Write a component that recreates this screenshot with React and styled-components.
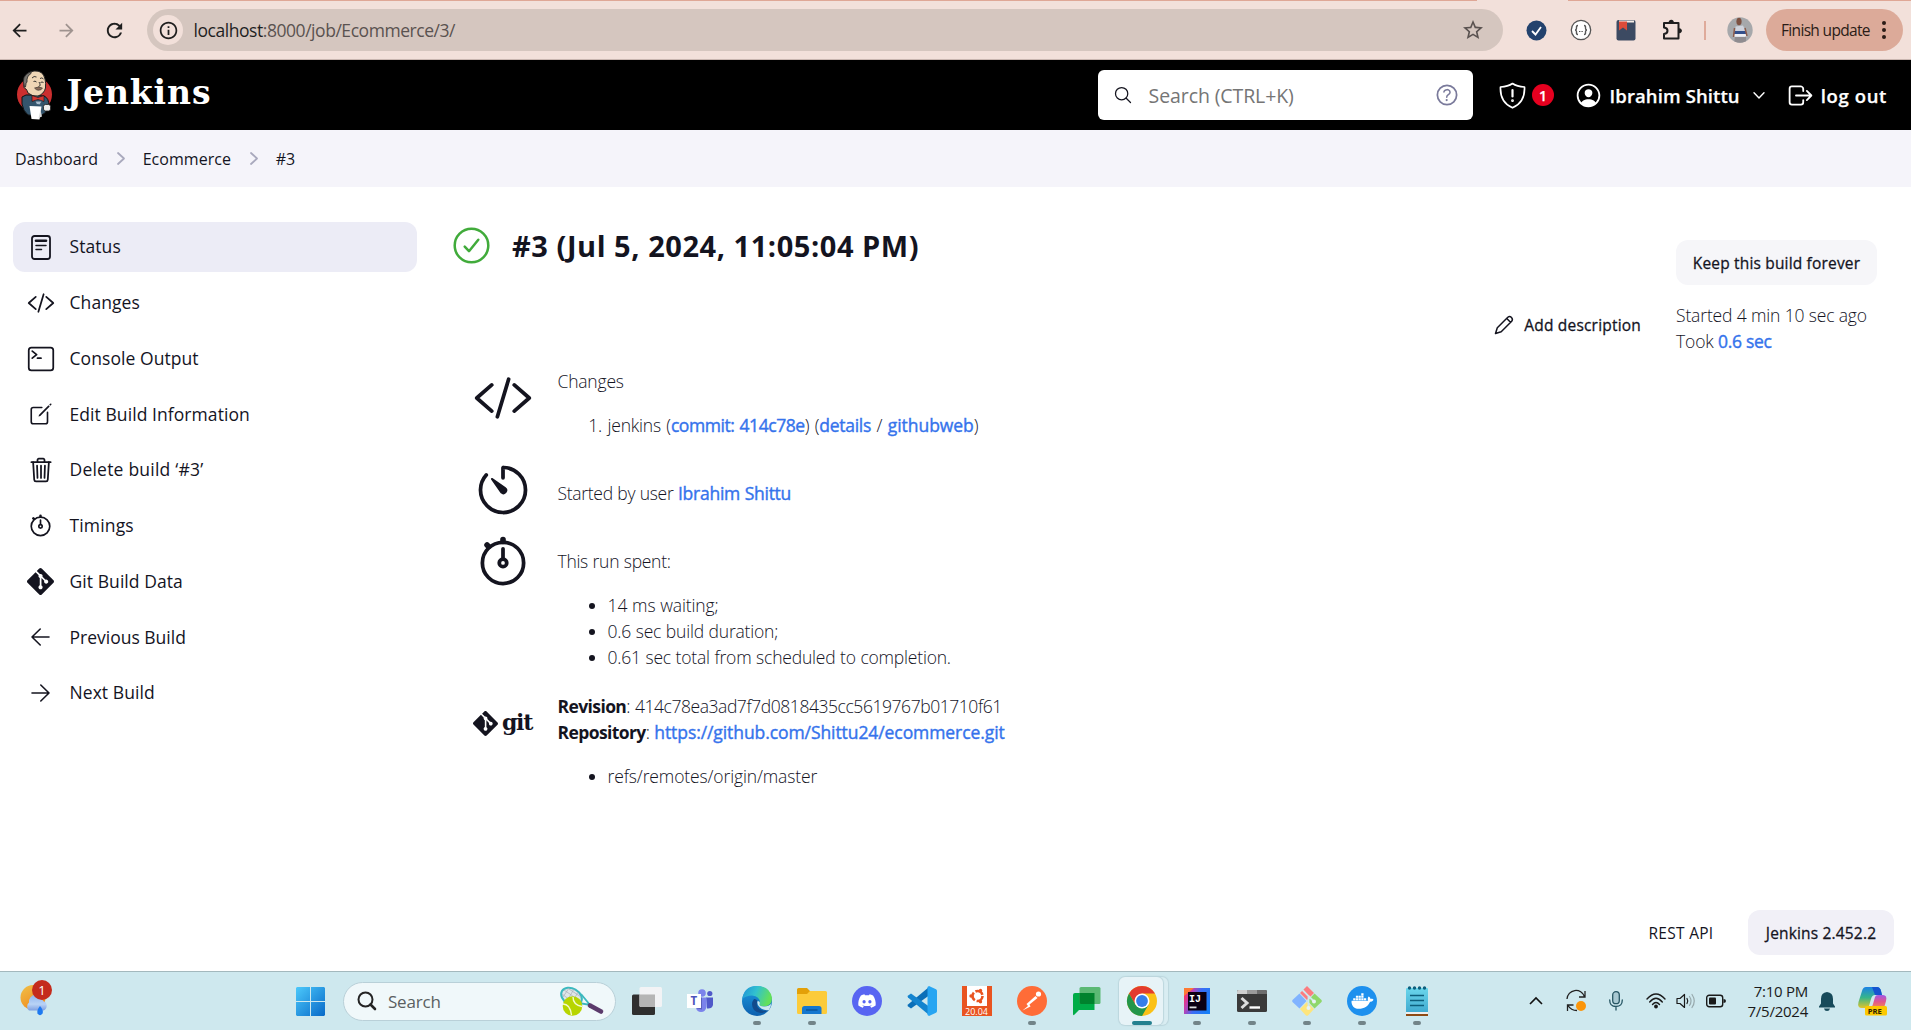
import React from "react";
import styled, { createGlobalStyle, css } from "styled-components";
import {
  IoCodeSlashOutline, IoTerminalOutline, IoCreateOutline, IoTrashOutline, IoStopwatchOutline,
  IoTimerOutline, IoSearchOutline, IoHelpCircleOutline, IoPersonCircleOutline, IoLogOutOutline,
} from "react-icons/io5";
import { MdArrowBack, MdArrowForward, MdRefresh, MdStarBorder, MdInfoOutline } from "react-icons/md";
import { SiGit } from "react-icons/si";
import { FaDiscord, FaDocker } from "react-icons/fa";

const ink = "#14141f";
const link = "#3573ec";

const GlobalStyle = createGlobalStyle`
  * { box-sizing: border-box; }
  body { margin: 0; background: #fff; overflow: hidden; }
  svg { display: block; flex: none; overflow: visible; }
`;

const medium = css`
  font-weight: 400;
  -webkit-text-stroke: 0.28px currentColor;
`;

const Screen = styled.div`
  width: 1911px;
  height: 1030px;
  display: flex;
  flex-direction: column;
  font-family: "Open Sans", "Noto Sans", sans-serif;
  color: ${ink};
  white-space: nowrap;
`;

/* ---------- browser toolbar ---------- */
const BrowserTop = styled.div`
  height: 1px;
  flex: none;
  background: linear-gradient(90deg, #dfa796 1477px, #f2e0da 1477px 1568px, #dfa796 1568px);
`;
const BrowserBar = styled.div`
  height: 59px;
  flex: none;
  display: flex;
  align-items: center;
  background: #f2e0da;
  border-bottom: 1px solid #c9b6b0;
  padding: 0 8px 0 7px;
`;
const NavButton = styled.div`
  width: 25px;
  margin-right: ${(p) => p.$gap}px;
  display: flex;
  justify-content: center;
  color: ${(p) => (p.$dim ? "#9f938f" : "#1f1f1f")};
`;
const AddressBar = styled.div`
  width: 1356px;
  height: 42px;
  border-radius: 21px;
  background: #d5c6bf;
  display: flex;
  align-items: center;
  padding: 0 18px 0 6px;
`;
const SiteInfo = styled.div`
  width: 30px;
  height: 30px;
  border-radius: 50%;
  background: #f2e0da;
  display: flex;
  align-items: center;
  justify-content: center;
  color: #1f1f1f;
`;
const Url = styled.div`
  flex: 1;
  margin-left: 10.5px;
  font-size: 17.5px;
  letter-spacing: -0.45px;
  color: #5a5250;
  span { color: #1f1f1f; }
`;
const Extensions = styled.div`
  display: flex;
  align-items: center;
  margin-left: 23px;
  gap: 23px;
  color: #1f1f1f;
`;
const BarDivider = styled.div`
  width: 2px;
  height: 19px;
  background: #dfab9b;
  margin: 0 -2px 0 -3px;
`;
const UpdateButton = styled.div`
  margin-left: auto;
  width: 137px;
  height: 42px;
  border-radius: 21px;
  background: #dcaa99;
  display: flex;
  align-items: center;
  justify-content: space-between;
  padding: 0 16px 0 15px;
  font-size: 15.5px;
  letter-spacing: -0.67px;
  color: #2b1c17;
`;

/* ---------- Jenkins header ---------- */
const Header = styled.header`
  height: 70px;
  flex: none;
  background: #000;
  color: #fff;
  display: flex;
  align-items: center;
  padding: 0 24px 0 16px;
`;
const LogoText = styled.div`
  margin: -4px auto 0 14.5px;
  font-family: "DejaVu Serif", serif;
  font-weight: 700;
  font-size: 33px;
  letter-spacing: 0.9px;
  line-height: 40px;
`;
const SearchBox = styled.div`
  width: 375px;
  height: 50px;
  border-radius: 6px;
  background: #fff;
  display: flex;
  align-items: center;
  padding: 0 12px 0 15px;
  color: ${ink};
`;
const SearchHint = styled.div`
  flex: 1;
  margin-left: 16px;
  font-size: 19.5px;
  letter-spacing: -0.1px;
  color: #757575;
`;
const HelpIcon = styled.div`color: #7a7a9b;`;
const AlertCount = styled.div`
  width: 22px;
  height: 22px;
  margin-left: 6px;
  border-radius: 50%;
  background: #e6001f;
  display: flex;
  align-items: center;
  justify-content: center;
  font-size: 14px;
  font-weight: 600;
`;
const HeaderItem = styled.div`
  display: flex;
  align-items: center;
  margin-left: ${(p) => p.$left}px;
  gap: ${(p) => p.$gap}px;
  font-size: 18.5px;
  font-weight: 600;
  letter-spacing: ${(p) => p.$ls || 0}px;
  -webkit-text-stroke: 0.25px currentColor;
`;

const Breadcrumbs = styled.nav`
  height: 57px;
  flex: none;
  display: flex;
  align-items: center;
  background: #f5f4fa;
  padding: 0 15px;
  font-size: 16px;
  letter-spacing: 0.06px;
  svg { margin: 0 18px 0 18.5px; }
`;

/* ---------- content ---------- */
const Body = styled.div`
  flex: 1;
  min-height: 0;
  display: flex;
  padding: 35px 0 0 13px;
`;
const Sidebar = styled.aside`
  width: 404px;
  display: flex;
  flex-direction: column;
  gap: 5.75px;
`;
const Task = styled.div`
  height: 50px;
  flex: none;
  border-radius: 12px;
  background: ${(p) => (p.$active ? "#ececf6" : "transparent")};
  display: flex;
  align-items: center;
  font-size: 17.5px;
  letter-spacing: ${(p) => p.$ls ?? 0.07}px;
`;
const TaskIcon = styled.div`
  width: 28px;
  margin: 0 15px 0 13.5px;
  display: flex;
  justify-content: center;
`;
const TaskLabel = styled.span`
  padding-bottom: 1.5px;
`;
const Main = styled.main`
  flex: 1;
  display: flex;
  flex-direction: column;
  padding: 0 17px 0 36px;
`;
const MainTop = styled.div`
  display: flex;
  height: 147px;
`;
const Title = styled.h1`
  margin: 0;
  height: 46px;
  flex: 1;
  display: flex;
  align-items: center;
  gap: 22px;
  font-size: 29px;
  font-weight: 700;
  letter-spacing: 0.55px;
`;
const AddDescription = styled.div`
  align-self: flex-start;
  display: flex;
  align-items: center;
  height: 30px;
  margin: 88px 35px 0 0;
  gap: 10.5px;
  font-size: 15.5px;
  letter-spacing: 0.2px;
  ${medium}
`;
const BuildMeta = styled.div`
  width: 218px;
  padding-top: 18px;
  font-size: 17.5px;
  font-weight: 300;
  line-height: 26px;
  letter-spacing: -0.15px;
`;
const Button = styled.div`
  width: ${(p) => p.$w}px;
  height: 45px;
  border-radius: 12px;
  background: ${(p) => p.$bg};
  display: flex;
  align-items: center;
  justify-content: center;
  font-size: 15.5px;
  letter-spacing: 0.17px;
  margin-bottom: ${(p) => p.$bottom || 0}px;
  ${medium}
`;
const Link = styled.span`
  color: ${link};
  letter-spacing: ${(p) => p.$ls ?? -0.35}px;
  ${medium}
  -webkit-text-stroke-width: 0.4px;
`;
const Row = styled.section`
  display: flex;
  height: ${(p) => p.$h}px;
  font-size: 17.5px;
  font-weight: 300;
  line-height: 26px;
  letter-spacing: -0.2px;
  word-spacing: 0.3px;
  b { font-weight: 700; letter-spacing: -0.6px; }
`;
const Tracked = styled.span`letter-spacing: ${(p) => p.$ls}px;`;
const RowIcon = styled.div`
  width: 60px;
  margin: ${(p) => p.$top}px 24.5px 0 20px;
`;
const RowText = styled.div`
  margin-top: -1px;
  padding-top: ${(p) => p.$top}px;
`;
const listStyle = css`
  margin: 18px 0 0;
  padding: 0 0 0 50px;
`;
const Bullets = styled.ul`${listStyle}`;
const Numbers = styled.ol`${listStyle} word-spacing: 1.1px;`;
const GitMark = styled.div`
  display: flex;
  align-items: center;
  gap: 4px;
  height: 30px;
  font-family: "DejaVu Serif", serif;
  font-size: 22px;
  font-weight: 700;
  letter-spacing: -1.3px;
  line-height: 26px;
  svg { margin-top: 2px; }
`;
const Footer = styled.footer`
  margin-top: auto;
  display: flex;
  justify-content: flex-end;
  align-items: center;
  gap: 34.5px;
  padding-bottom: 16px;
  font-size: 15.5px;
  letter-spacing: 0.3px;
`;

/* ---------- taskbar ---------- */
const Taskbar = styled.div`
  height: 59px;
  flex: none;
  border-top: 1px solid #a3b8bd;
  background: #cee8ee;
  display: flex;
  align-items: center;
`;
const Weather = styled.div`
  position: relative;
  width: 36px;
  height: 44px;
  margin: 0 240px 0 20px;
`;
const WeatherCount = styled.div`
  position: absolute;
  left: 12px;
  top: 1px;
  width: 20px;
  height: 20px;
  border-radius: 50%;
  background: #c42b1c;
  color: #fff;
  font-size: 13px;
  line-height: 20px;
  text-align: center;
`;
const TaskSearch = styled.div`
  width: 273px;
  height: 39px;
  margin: 0 4px 0 17.5px;
  border-radius: 20px;
  border: 1px solid #b9d0d8;
  background: #f0f8fa;
  display: flex;
  align-items: center;
  padding: 0 11px 0 13px;
  font-size: 17px;
  letter-spacing: -0.2px;
  color: #5a5f61;
  span { flex: 1; margin-left: 11.5px; }
`;
const AppSlot = styled.div`
  position: relative;
  width: 55px;
  height: 58px;
  display: flex;
  align-items: center;
  justify-content: center;
`;
const Indicator = styled.i`
  position: absolute;
  top: 49px;
  left: ${(p) => (p.$active ? 17.5 : 23.5)}px;
  width: ${(p) => (p.$active ? 20 : 8)}px;
  height: 4px;
  border-radius: 2px;
  background: ${(p) => (p.$active ? "#24808f" : "#728488")};
`;
const Tile = styled.div`
  position: absolute;
  left: ${(p) => p.$x}px;
  top: 5px;
  width: 44px;
  height: 48px;
  border-radius: 6px;
  background: ${(p) => p.$bg};
  box-shadow: 0 0 1px 1px #bcd6dd;
`;
const Front = styled.div`position: relative;`;
const Tray = styled.div`
  margin-left: auto;
  display: flex;
  align-items: center;
  padding-right: 11px;
  color: #1a1a1a;
`;
const TraySlot = styled.div`
  width: ${(p) => p.$w}px;
  display: flex;
  justify-content: center;
`;
const Clock = styled.div`
  width: 72px;
  text-align: right;
  font-size: 15px;
  line-height: 20px;
  letter-spacing: -0.25px;
`;

/* ---------- drawings ---------- */
const Butler = () => (
  <svg width="36" height="50" viewBox="0 0 36 50">
    <ellipse cx="18.5" cy="24.500" rx="17.500" ry="17.500" fill="#cc2f2f" />
    <path d="M6 27 Q10 24 14 25 L28 26 Q33 28 33 36 L29 43 L24 46 L12 45 Q7 41 6 34z" fill="#34556d" stroke="#111" strokeWidth="1" />
    <path d="M9 12 Q9 2 18 1 Q27 0 29 9 Q30 13 29.500 18 Q28 24 22 26 Q17 27 12 23 Q11 20 10 19 Q6 18 9 12z" fill="#efd6b5" stroke="#222" strokeWidth="1" />
    <path d="M8.500 17 Q4.500 6 14 2 Q16 2 15 3.500 Q10.500 6 11 12 Q10 12 9.500 17z" fill="#77746f" stroke="#222" strokeWidth="0.8" />
    <path d="M16 8 Q18 5.500 20.500 7 M24 8.500 Q26 7 27.500 9 M17.500 11.500 Q19 10.500 20.500 12 M24.500 12.500 Q26 11.500 27.500 12.500 M23 12 Q25.500 16 22.500 16.500" fill="none" stroke="#222" strokeWidth="0.9" />
    <path d="M18.500 18 Q22.500 16 26.500 18 Q25.500 20.500 22 20.300 Q20 20 18.500 18z" fill="#8a6b58" stroke="#222" strokeWidth="0.5" />
    <path d="M16 25.500 L22 27.500 L28 25.500 L28 31.500 L22 29.500 L16 31.500z" fill="#d33833" stroke="#111" strokeWidth="0.6" />
    <path d="M19 31 L26 31 L24 35 L20.500 34.500z" fill="#a9bccd" stroke="#34556d" />
    <path d="M13.500 36 L25.500 36.500 L23.500 49.500 L15.500 49z" fill="#fff" />
    <path d="M24.500 40 L26 46.500 L22.500 48z" fill="#ddd" />
    <rect x="27.500" y="34.500" width="7" height="6.500" rx="2" fill="#eee" stroke="#222" strokeWidth="0.8" />
  </svg>
);
const Shield = () => (
  <svg width="27" height="27" viewBox="0 0 27 27" fill="none" stroke="#fff" strokeWidth="1.7" strokeLinejoin="round" strokeLinecap="round">
    <path d="M13.5 1.5 C10 4 6 4.8 1.5 5 C1 15 5 22 13.5 25.8 C22 22 26 15 25.5 5 C21 4.8 17 4 13.5 1.5z" />
    <path d="M13.5 8 V14.5" strokeWidth="2.2" /><circle cx="13.5" cy="18.7" r="0.6" strokeWidth="1.6" />
  </svg>
);
const ChevronDown = () => <svg width="12" height="7" viewBox="0 0 12 7" fill="none" stroke="#fff" strokeWidth="1.4" strokeLinecap="round" strokeLinejoin="round"><path d="M1 0.800 L6 6 L11 0.800" /></svg>;
const Crumb = () => <svg width="8" height="13" viewBox="0 0 8 13" fill="none" stroke="#a9a9bd" strokeWidth="1.800" strokeLinecap="round" strokeLinejoin="round"><path d="M1 1 L7 6.500 L1 12" /></svg>;
const StatusDoc = () => (
  <svg width="20" height="25" viewBox="0 0 20 25" fill="none" stroke={ink} strokeLinecap="round">
    <rect x="1" y="1" width="18" height="23" rx="2.5" strokeWidth="1.8" />
    <path d="M5 5.8 H15" strokeWidth="2.6" /><path d="M5 10.5 H15 M5 14.5 H10.5" strokeWidth="1.5" />
  </svg>
);
const Arrow = ({ flip }) => (
  <svg width="19" height="18" viewBox="0 0 19 18" fill="none" stroke={ink} strokeWidth="1.600" strokeLinecap="round" strokeLinejoin="round">
    <path d={flip ? "M1 9 H18 M9.800 1 L18 9 L9.800 17" : "M18 9 H1 M9.200 1 L1 9 L9.200 17"} />
  </svg>
);
const Pencil = () => (
  <svg width="20" height="20" viewBox="0 0 20 20" fill="none" stroke={ink} strokeWidth="1.500" strokeLinejoin="round" strokeLinecap="round">
    <path d="M1.500 18.500 L3.300 12.800 L13.800 2.300 Q15.700 0.700 17.500 2.500 Q19.200 4.300 17.700 6.200 L7.200 16.700z M12.800 3.500 L16.500 7.200" />
  </svg>
);
const StatusOk = () => (
  <svg width="37" height="37" viewBox="0 0 37 37" fill="none" stroke="#41ab3b" strokeWidth="2.5" strokeLinecap="round" strokeLinejoin="round">
    <circle cx="18.5" cy="18.5" r="16.8" /><path d="M11.7 19.6 L16 24.2 L25.3 12.8" />
  </svg>
);
const CheckBadge = () => (
  <svg width="21" height="21" viewBox="0 0 21 21"><circle cx="10.5" cy="10.5" r="10" fill="#23426d" /><path d="M6 11 L9.5 14.5 L15 7" stroke="#fff" strokeWidth="1.8" fill="none" /></svg>
);
const JsonBadge = () => (
  <svg width="22" height="22" viewBox="0 0 22 22" fill="none" stroke="#555"><circle cx="11" cy="11" r="9.7" fill="#fff" strokeWidth="1.3" /><path d="M8 6.5 Q6.3 6.5 6.5 8.5 Q6.6 11 5 11 Q6.6 11 6.5 13.5 Q6.3 15.5 8 15.5 M14 6.5 Q15.7 6.5 15.5 8.5 Q15.4 11 17 11 Q15.4 11 15.5 13.5 Q15.7 15.5 14 15.5" strokeWidth="1.4" /><path d="M9 12.5h4" strokeDasharray="1 0.6" /></svg>
);
const BookBadge = () => (
  <svg width="22" height="22" viewBox="0 0 22 22"><rect x="1.5" y="1" width="19" height="20.5" rx="2" fill="#3c4a62" /><path d="M4 1.5 h15 v2 H4z" fill="#f7efe9" /><path d="M4 2.5 h8 v9 l-4 -3 l-4 3z" fill="#dd4b39" /></svg>
);
const Puzzle = () => (
  <svg width="24" height="24" viewBox="0 0 24 24" fill="none" stroke="#1f1f1f" strokeWidth="2" strokeLinejoin="round">
    <path d="M4 5 H18.5 V20.5 H4 V16 Q7.5 15.5 7.5 12.7 Q7.5 10 4 9.5z" /><path d="M9.5 4 V3.5 Q11.3 1.3 13 3.5 V4z M19.5 11 H20 Q22.5 12.7 20 14.5 H19.5z" fill="#1f1f1f" strokeWidth="1.4" />
  </svg>
);
const Avatar = () => (
  <svg width="26" height="26" viewBox="0 0 26 26"><clipPath id="av"><circle cx="13" cy="13" r="12.7" /></clipPath><g clipPath="url(#av)"><rect width="26" height="26" fill="#a6a8ab" /><ellipse cx="12" cy="4.500" rx="2.600" ry="3.800" fill="#7d5142" /><path d="M8.500 9.500 L16 8.500 L18 13 V20 H8z" fill="#cfd3dd" /><path d="M7.500 14 H19 V17 H7z" fill="#33508c" /><path d="M7.500 17 H19.500 V19.500 H7z" fill="#f0f0f4" /><path d="M8 20 H19 V26 H7z" fill="#8f8c90" /><path d="M7.500 11 L6.500 20 M18 11 L20 19" stroke="#8c5b4b" strokeWidth="1.500" /></g></svg>
);
const Dots = () => (
  <svg width="6" height="20" viewBox="0 0 6 20" fill="#2b1c17"><circle cx="3" cy="3" r="2" /><circle cx="3" cy="10" r="2" /><circle cx="3" cy="17" r="2" /></svg>
);
const WeatherIcon = () => (
  <svg width="36" height="44" viewBox="0 0 36 44">
    <defs><linearGradient id="sun" x1="0" y1="0" x2="0.6" y2="1"><stop offset="0" stopColor="#f0c14a" /><stop offset="1" stopColor="#f08a1d" /></linearGradient><linearGradient id="cloud" x1="0" y1="0" x2="0" y2="1"><stop offset="0" stopColor="#8fb4ee" /><stop offset="0.6" stopColor="#b9d3f6" /><stop offset="1" stopColor="#7f9fe0" /></linearGradient></defs>
    <circle cx="13" cy="18.500" r="12.500" fill="url(#sun)" />
    <path d="M9 31.500 a5.200 5.200 0 0 1 0 -8 a7 7 0 0 1 14 -1.500 a5 5 0 0 1 0.500 9.500z" fill="url(#cloud)" />
    <path d="M20 27 Q24 31.500 22.500 34.500 Q20 38 17.500 34.500 Q16.500 31 20 27z" fill="#1d79f0" />
  </svg>
);
const WinLogo = () => (
  <svg width="29" height="29" viewBox="0 0 29 29"><defs><linearGradient id="win" x1="0" y1="0" x2="1" y2="1"><stop offset="0" stopColor="#4cc9fb" /><stop offset="1" stopColor="#0769c8" /></linearGradient></defs><path d="M1 0h13v14H0V1zM15 0h13l1 1v13H15zM0 15h14v14H1l-1-1zM15 15h14v13l-1 1H15z" fill="url(#win)" /></svg>
);
const Magnifier = () => (
  <svg width="20" height="20" viewBox="0 0 20 20" fill="none" stroke="#242424" strokeLinecap="round"><circle cx="8.5" cy="8.5" r="7" strokeWidth="2" /><path d="M13.5 13.5 L18 18" strokeWidth="2.6" /></svg>
);
const Racket = () => (
  <svg width="44" height="29" viewBox="0 0 44 29">
    <ellipse cx="11.5" cy="9.5" rx="11" ry="8" transform="rotate(30 11.5 9.5)" fill="#dfe6ea" stroke="#3bb9bf" strokeWidth="2" />
    <path d="M4 3 L20 14 M9 2 L21 10 M2 7 L14 16 M7 14 L14 2 M12 16 L18 5 M3 10 L9 1" stroke="#a9aeb8" strokeWidth="0.7" />
    <path d="M21 7 L30 18 L19 16" fill="none" stroke="#3bb9bf" strokeWidth="1.8" />
    <path d="M30 18.5 L41 24.5" stroke="#5b3a6b" strokeWidth="4.6" strokeLinecap="round" />
    <circle cx="12.5" cy="19" r="9.8" fill="#b7d500" /><path d="M3 17 Q10 17 11.5 28 M13 10 Q13 18 22 19.5" fill="none" stroke="#f4fbd0" strokeWidth="1.4" />
  </svg>
);
const TaskView = () => (
  <svg width="30" height="30" viewBox="0 0 30 30"><rect x="0" y="8.5" width="23" height="20.5" rx="1.5" fill="#2f2f2f" /><rect x="7.5" y="1" width="22.5" height="20" rx="1.5" fill="#f4f4f5" opacity="0.96" /><path d="M7.5 8.5H23V21H9q-1.5 0-1.5-1.5z" fill="#b5b5b5" /></svg>
);
const SvgLetter = styled.text`
  font-family: ${(p) => p.$font || '"Open Sans", sans-serif'};
  font-weight: ${(p) => p.$w || 700};
  font-size: ${(p) => p.$s}px;
`;
const Teams = () => (
  <svg width="30" height="30" viewBox="0 0 30 30"><circle cx="15" cy="7" r="3.800" fill="#7b83eb" /><circle cx="22.800" cy="7.500" r="2.600" fill="#5059c9" /><path d="M19 11.500 H26 V19 Q25 23 20 22.500z" fill="#5059c9" /><path d="M9 11.500 H19.500 V21 Q18.500 26 14 26 Q10 26 9 22z" fill="#7b83eb" /><path d="M9 11.500h6v12l-5-1z" fill="#4b52a8" opacity="0.7" /><rect x="0" y="8" width="14" height="14" fill="#fff" /><SvgLetter x="3.600" y="19" $s={11.500} fill="#4b53bc">T</SvgLetter></svg>
);
const Edge = () => (
  <svg width="30" height="30" viewBox="0 0 30 30"><defs><linearGradient id="eg1" x1="0" y1="0" x2="1" y2="0.3"><stop offset="0" stopColor="#1c8fd8" /><stop offset="0.5" stopColor="#32c1cf" /><stop offset="1" stopColor="#63e05a" /></linearGradient><linearGradient id="eg2" x1="0" y1="0" x2="0" y2="1"><stop offset="0" stopColor="#1b9de2" /><stop offset="1" stopColor="#0d5fae" /></linearGradient></defs>
    <circle cx="15" cy="15" r="15" fill="url(#eg2)" /><path d="M0.3 13 Q2 0 15 0 Q28 0 30 12 Q30 20 22 20.5 Q16 20.5 18 17 Q18 10 10 9.5 Q4 9.5 0.3 13z" fill="url(#eg1)" /><path d="M12 13 Q8 18 12 24 Q18 30 27 24 Q22 26 17.5 23 Q13.5 20 15.5 15 Q14 12.5 12 13z" fill="#124a8c" /><path d="M18 17 Q16 20.5 22 20.5 Q27 20.5 29.4 17.5 Q28.5 22 27 24 Q21 25 17.5 21 Q14.5 18 15.7 15 Q17.5 15 18 17z" fill="#cee8ee" /></svg>
);
const Folder = () => (
  <svg width="30" height="30" viewBox="0 0 30 30"><path d="M0 3.5 Q0 2 1.5 2 H10 L13 5 H20 V12 H0z" fill="#e3a008" /><path d="M0 8 H10 L13 5 H28.5 Q30 5 30 6.5 V26.5 Q30 28 28.5 28 H1.500 Q0 28 0 26.500z" fill="#fccb3a" /><path d="M5 28 V22.500 Q5 20 7.500 20 H22 Q24.500 20 24.500 22.500 V28z" fill="#1577cf" /><path d="M9 24 H20.500" stroke="#0a4f93" strokeWidth="1.300" /></svg>
);
const Discord = () => (
  <svg width="30" height="30" viewBox="0 0 30 30"><circle cx="15" cy="15" r="15" fill="#5865f2" /><g transform="translate(5.500 5.500)"><FaDiscord size={19} color="#fff" /></g></svg>
);
const VSCode = () => (
  <svg width="30" height="30" viewBox="0 0 30 30"><path d="M1 18.500 L22 1 V9.500 L4 22.500 L0.500 20z" fill="#0b6fb8" /><path d="M1 11.500 L22 29 V20.500 L4 7.500 L0.500 10z" fill="#1384cf" /><path d="M22 0 L29 3.200 Q30 3.700 30 5 V25 Q30 26.300 29 26.800 L22 30 L20.500 29 V1z" fill="#27a5f2" /></svg>
);
const Ubuntu = () => (
  <svg width="30" height="30" viewBox="0 0 30 30"><rect width="30" height="30" fill="#e95420" /><rect x="5" y="0" width="20" height="20" fill="#fff" /><circle cx="15.500" cy="10" r="5" fill="none" stroke="#e95420" strokeWidth="2.600" strokeDasharray="8.600 1.800" /><circle cx="9" cy="10" r="1.700" fill="#e95420" /><circle cx="18.500" cy="4.500" r="1.700" fill="#e95420" /><circle cx="18.500" cy="15.700" r="1.700" fill="#e95420" /><SvgLetter x="3" y="28.800" $s={9} $w={400} fill="#fff">20.04</SvgLetter></svg>
);
const Postman = () => (
  <svg width="30" height="30" viewBox="0 0 30 30"><circle cx="15" cy="15" r="15" fill="#ff6c37" /><circle cx="21.500" cy="8" r="2.600" fill="#fff" /><path d="M18.500 10 L9.500 18 L11 20 L5.500 24.500 L13.500 20.500 L12.500 18.500 L20.500 12z" fill="#fff" /></svg>
);
const Chat = () => (
  <svg width="28" height="30" viewBox="0 0 28 30"><path d="M0 9 Q0 7 2 7 H21.500 V24 H6 L1 29 Q0 29.500 0 28z" fill="#00ac47" /><rect x="6.500" y="1" width="21" height="17" rx="1.500" fill="#5bb974" /><path d="M6.500 7H21.500V18H8q-1.500 0-1.500-1.500z" fill="#00832d" /></svg>
);
const Chrome = () => (
  <svg width="30" height="30" viewBox="0 0 30 30"><circle cx="15" cy="15" r="15" fill="#fbc116" /><path d="M15 7.500 H28 A15 15 0 0 0 2 7.500 L8.500 18.700z" fill="#e33b2e" /><path d="M2 7.500 A15 15 0 0 0 15 30 L21.500 18.700 L15 15 L8.500 18.700z" fill="#23964a" /><circle cx="15" cy="15" r="7.500" fill="#fff" /><circle cx="15" cy="15" r="5.900" fill="#357de8" /></svg>
);
const Intellij = () => (
  <svg width="26" height="26" viewBox="0 0 26 26"><defs><linearGradient id="ij" x1="0" y1="0.300" x2="1" y2="0.700"><stop offset="0" stopColor="#fe315d" /><stop offset="0.200" stopColor="#c33fb0" /><stop offset="0.500" stopColor="#3b6df5" /><stop offset="1" stopColor="#157ef6" /></linearGradient></defs><rect width="26" height="26" fill="url(#ij)" /><path d="M0 0H10L0 8z" fill="#fd7a34" /><rect x="4" y="4" width="18.500" height="18.500" fill="#0b0012" /><SvgLetter x="5" y="13.500" $s={10} $font='"Liberation Mono", monospace' fill="#fff">IJ</SvgLetter><rect x="5.500" y="18.500" width="7" height="1.800" fill="#ddd" /></svg>
);
const TerminalApp = () => (
  <svg width="30" height="24" viewBox="0 0 30 24"><rect y="1" width="30" height="22" rx="1.500" fill="#3a3a3a" /><path d="M0 5V2.500Q0 1 1.500 1H10V5z" fill="#cfcfcf" /><path d="M10 1H20V5H10z" fill="#9b9b9b" /><path d="M20 1H28.500Q30 1 30 2.500V5H20z" fill="#6d6d6d" /><path d="M4.500 9 L10 14 L4.500 19" fill="none" stroke="#dcdcdc" strokeWidth="3" /><path d="M12.500 18.500H23" stroke="#fff" strokeWidth="2.400" /></svg>
);
const GitApp = () => (
  <svg width="30" height="30" viewBox="0 0 30 30"><path d="M15 0 L22 7 L15 14 L8 7z" fill="#fb7c80" /><path d="M7.500 7.500 L14.500 15 L7.500 22.500 L0.500 16 Q-0.200 15 0.500 14z" fill="#80b3ff" /><path d="M22.500 7.500 L29.500 14 Q30.200 15 29.500 16 L22.500 22.500 L15.500 15z" fill="#8fd76a" /><path d="M15 16 L22 23 L16 29.500 Q15 30.200 14 29.500 L8 23z" fill="#fde57c" /><path d="M10.500 4 L16.500 10 V22 M16.500 10 L22 15.500" fill="none" stroke="#cee8ee" strokeWidth="1.800" /><circle cx="16.500" cy="22" r="2" fill="#e7f2f4" /><circle cx="22" cy="15.500" r="2" fill="#e7f2f4" /></svg>
);
const DockerApp = () => (
  <svg width="30" height="30" viewBox="0 0 30 30"><circle cx="15" cy="15" r="15" fill="#1d90ee" /><g transform="translate(4.500 4)"><FaDocker size={22} color="#fff" /></g></svg>
);
const Notepad = () => (
  <svg width="22" height="30" viewBox="0 0 22 30"><defs><linearGradient id="np" x1="0" y1="0" x2="0" y2="1"><stop offset="0" stopColor="#6bd6ec" /><stop offset="1" stopColor="#3fa9cf" /></linearGradient></defs><rect y="2" width="22" height="25" rx="1" fill="url(#np)" /><rect y="26" width="22" height="2" fill="#eee" /><rect y="28" width="22" height="2" fill="#8e4a14" /><path d="M4 9.500H18M4 14.500H18M4 19.500H18" stroke="#0e5f7d" strokeWidth="1.600" /><g fill="#0e5f7d"><circle cx="3.500" cy="2" r="1.700" /><circle cx="8.500" cy="2" r="1.700" /><circle cx="13.500" cy="2" r="1.700" /><circle cx="18.500" cy="2" r="1.700" /></g></svg>
);
const TrayUp = () => <svg width="14" height="8" viewBox="0 0 14 8" fill="none" stroke="#111" strokeWidth="1.600"><path d="M1 7 L7 1 L13 7" /></svg>;
const Sync = () => (
  <svg width="20" height="22" viewBox="0 0 20 22" fill="none" stroke="#222" strokeWidth="1.300"><path d="M1 9 A9 9 0 0 1 18.500 6.500 M19 1 V7 H13 M1.500 21 V15 H7.500 M2 15.500 Q5 20.500 11 20.500" /><circle cx="15" cy="16" r="5" fill="#fb950a" stroke="none" /></svg>
);
const Mic = () => <svg width="14" height="20" viewBox="0 0 14 20" fill="none" stroke="#275664" strokeWidth="1.300" strokeLinecap="round"><rect x="3.700" y="0.700" width="6.600" height="12" rx="3.300" fill="#a9c9d2" /><path d="M0.700 9 Q0.700 15.500 7 15.500 Q13.300 15.500 13.300 9 M7 15.500V19" /></svg>;
const Wifi = () => <svg width="20" height="16" viewBox="0 0 20 16" fill="none" stroke="#1a1a1a" strokeWidth="1.400" strokeLinecap="round"><path d="M1 6 Q10 -4 19 6 M3.700 9 Q10 1.500 16.300 9 M6.500 11.500 Q10 7.500 13.500 11.500" /><circle cx="10" cy="13.500" r="1.200" fill="#1a1a1a" /></svg>;
const Speaker = () => <svg width="20" height="16" viewBox="0 0 20 16" fill="none" stroke="#1a1a1a" strokeWidth="1.200" strokeLinecap="round" strokeLinejoin="round"><path d="M1 5.500H4L8.500 1.500V14.500L4 10.500H1z" /><path d="M11 5.500Q12.500 8 11 10.500" /><path d="M13.500 3.500Q16.500 8 13.500 12.500M16 1.500Q20.500 8 16 14.500" stroke="#97a8ac" /></svg>;
const Battery = () => <svg width="20" height="14" viewBox="0 0 20 14"><rect x="0.700" y="1.200" width="16" height="11.500" rx="2.500" fill="none" stroke="#1a1a1a" strokeWidth="1.400" /><rect x="3" y="3.500" width="7" height="7" rx="1" fill="#1a1a1a" /><path d="M17.500 5Q20 5 20 7Q20 9 17.500 9z" fill="#1a1a1a" /></svg>;
const Bell = () => <svg width="16" height="19" viewBox="0 0 16 19" fill="#174a5a"><path d="M8 0Q14 0.500 14 7V11.500L16 14.500V15.500H0V14.500L2 11.500V7Q2 0.500 8 0zM5 16.500H11Q10.500 19 8 19Q5.500 19 5 16.500z" /></svg>;
const Copilot = () => (
  <svg width="30" height="29" viewBox="0 0 30 29"><defs><linearGradient id="cp1" x1="0" y1="0" x2="0" y2="1"><stop offset="0" stopColor="#1c82e6" /><stop offset="0.500" stopColor="#36b58b" /><stop offset="1" stopColor="#e0c52b" /></linearGradient><linearGradient id="cp2" x1="0.500" y1="0" x2="0.500" y2="1"><stop offset="0" stopColor="#a05ae6" /><stop offset="0.500" stopColor="#e0558f" /><stop offset="1" stopColor="#f5894e" /></linearGradient></defs>
    <path d="M8 0H19Q22 0 23 4L24 8H17Q14 8 13 12L11 19Q10 21 7 21H4Q-1 21 0.500 15L4 4Q5 0 8 0z" fill="url(#cp1)" /><path d="M14 0H19Q22 0 23 4L24 8H17Z" fill="#1554d0" /><path d="M20 8H25Q29.500 8 28 14L26 21H11Q14 21 15 17L17 10Q17.500 8 20 8z" fill="url(#cp2)" /><rect x="7" y="19" width="22" height="9.500" rx="1.500" fill="#fcc800" /><SvgLetter x="9.800" y="26.600" $s={7.600} fill="#2a2000">PRE</SvgLetter></svg>
);

const tasks = [
  ["Status", <StatusDoc />],
  ["Changes", <IoCodeSlashOutline size={28} />],
  ["Console Output", <IoTerminalOutline size={28} />],
  ["Edit Build Information", <IoCreateOutline size={26} />],
  ["Delete build ‘#3’", <IoTrashOutline size={28} />, 0.22],
  ["Timings", <IoStopwatchOutline size={27} />, 0.15],
  ["Git Build Data", <SiGit size={27} />],
  ["Previous Build", <Arrow />, 0],
  ["Next Build", <Arrow flip />],
];

const pinned = [
  [TaskView, 0], [Teams, 0], [Edge, 1], [Folder, 1], [Discord, 0], [VSCode, 0], [Ubuntu, 0], [Postman, 1],
  [Chat, 0], [Chrome, 2], [Intellij, 1], [TerminalApp, 1], [GitApp, 1], [DockerApp, 1], [Notepad, 1],
];

export default function App() {
  return (
    <Screen>
      <GlobalStyle />
      <BrowserTop />
      <BrowserBar>
        <NavButton $gap={22}><MdArrowBack size={21} /></NavButton>
        <NavButton $gap={23} $dim><MdArrowForward size={21} /></NavButton>
        <NavButton $gap={20}><MdRefresh size={23} /></NavButton>
        <AddressBar>
          <SiteInfo><MdInfoOutline size={21} /></SiteInfo>
          <Url><span>localhost</span>:8000/job/Ecommerce/3/</Url>
          <MdStarBorder size={24} color="#5a5250" />
        </AddressBar>
        <Extensions>
          <CheckBadge /><JsonBadge /><BookBadge /><Puzzle /><BarDivider /><Avatar />
        </Extensions>
        <UpdateButton>Finish update<Dots /></UpdateButton>
      </BrowserBar>

      <Header>
        <Butler />
        <LogoText>Jenkins</LogoText>
        <SearchBox>
          <IoSearchOutline size={20} />
          <SearchHint>Search (CTRL+K)</SearchHint>
          <HelpIcon><IoHelpCircleOutline size={28} /></HelpIcon>
        </SearchBox>
        <HeaderItem $left={26.5} $gap={0}><Shield /><AlertCount>1</AlertCount></HeaderItem>
        <HeaderItem $left={20} $gap={6.5} $ls={0.1}><IoPersonCircleOutline size={29} />Ibrahim Shittu</HeaderItem>
        <HeaderItem $left={13} $gap={0}><ChevronDown /></HeaderItem>
        <HeaderItem $left={21} $gap={6} $ls={0.63}><IoLogOutOutline size={29} />log out</HeaderItem>
      </Header>

      <Breadcrumbs>
        Dashboard<Crumb />Ecommerce<Crumb />#3
      </Breadcrumbs>

      <Body>
        <Sidebar>
          {tasks.map(([label, icon, ls], i) => (
            <Task key={label} $active={i === 0} $ls={ls}><TaskIcon>{icon}</TaskIcon><TaskLabel>{label}</TaskLabel></Task>
          ))}
        </Sidebar>
        <Main>
          <MainTop>
            <Title><StatusOk />#3 (Jul 5, 2024, 11:05:04 PM)</Title>
            <AddDescription><Pencil />Add description</AddDescription>
            <BuildMeta>
              <Button $w={201} $bg="#f6f6f9" $bottom={17}>Keep this build forever</Button>
              Started 4 min 10 sec ago<br />
              Took <Link $ls={-0.3}>0.6 sec</Link>
            </BuildMeta>
          </MainTop>
          <Row $h={94}>
            <RowIcon $top={-1}><IoCodeSlashOutline size={60} /></RowIcon>
            <RowText $top={0}>
              Changes
              <Numbers>
                <li>jenkins (<Link $ls={-0.45}>commit: 414c78e</Link>) (<Link $ls={-0.25}>details</Link> / <Link $ls={-0.05}>githubweb</Link>)</li>
              </Numbers>
            </RowText>
          </Row>
          <Row $h={70}>
            <RowIcon $top={-3}><IoTimerOutline size={60} /></RowIcon>
            <RowText $top={18}><Tracked $ls={-0.3}>Started by user </Tracked><Link $ls={-0.25}>Ibrahim Shittu</Link></RowText>
          </Row>
          <Row $h={161}>
            <RowIcon $top={-2}><IoStopwatchOutline size={60} /></RowIcon>
            <RowText $top={16}>
              <Tracked $ls={-0.28}>This run spent:</Tracked>
              <Bullets>
                <li><Tracked $ls={-0.1}>14 ms waiting;</Tracked></li>
                <li>0.6 sec build duration;</li>
                <li>0.61 sec total from scheduled to completion.</li>
              </Bullets>
            </RowText>
          </Row>
          <Row $h={110}>
            <RowIcon $top={13}><GitMark><SiGit size={25} />git</GitMark></RowIcon>
            <RowText $top={0}>
              <b>Revision</b>: <Tracked $ls={-0.44}>414c78ea3ad7f7d0818435cc5619767b01710f61</Tracked><br />
              <b>Repository</b>: <Link $ls={-0.08}>https://github.com/Shittu24/ecommerce.git</Link>
              <Bullets><li><Tracked $ls={-0.13}>refs/remotes/origin/master</Tracked></li></Bullets>
            </RowText>
          </Row>
          <Footer>
            REST API
            <Button $w={146} $bg="#f1f0f7">Jenkins 2.452.2</Button>
          </Footer>
        </Main>
      </Body>

      <Taskbar>
        <Weather><WeatherIcon /><WeatherCount>1</WeatherCount></Weather>
        <WinLogo />
        <TaskSearch><Magnifier /><span>Search</span><Racket /></TaskSearch>
        {pinned.map(([Icon, state], i) => (
          <AppSlot key={i}>
            {state === 2 && <><Tile $x={9} $bg="#d9edf2" /><Tile $x={4} $bg="#e7f3f7" /></>}
            <Front><Icon /></Front>
            {state > 0 && <Indicator $active={state === 2} />}
          </AppSlot>
        ))}
        <Tray>
          <TraySlot $w={40}><TrayUp /></TraySlot>
          <TraySlot $w={40}><Sync /></TraySlot>
          <TraySlot $w={40}><Mic /></TraySlot>
          <TraySlot $w={40}><Wifi /></TraySlot>
          <TraySlot $w={20}><Speaker /></TraySlot>
          <TraySlot $w={40}><Battery /></TraySlot>
          <Clock>7:10 PM<br />7/5/2024</Clock>
          <TraySlot $w={38}><Bell /></TraySlot>
          <TraySlot $w={54}><Copilot /></TraySlot>
        </Tray>
      </Taskbar>
    </Screen>
  );
}
